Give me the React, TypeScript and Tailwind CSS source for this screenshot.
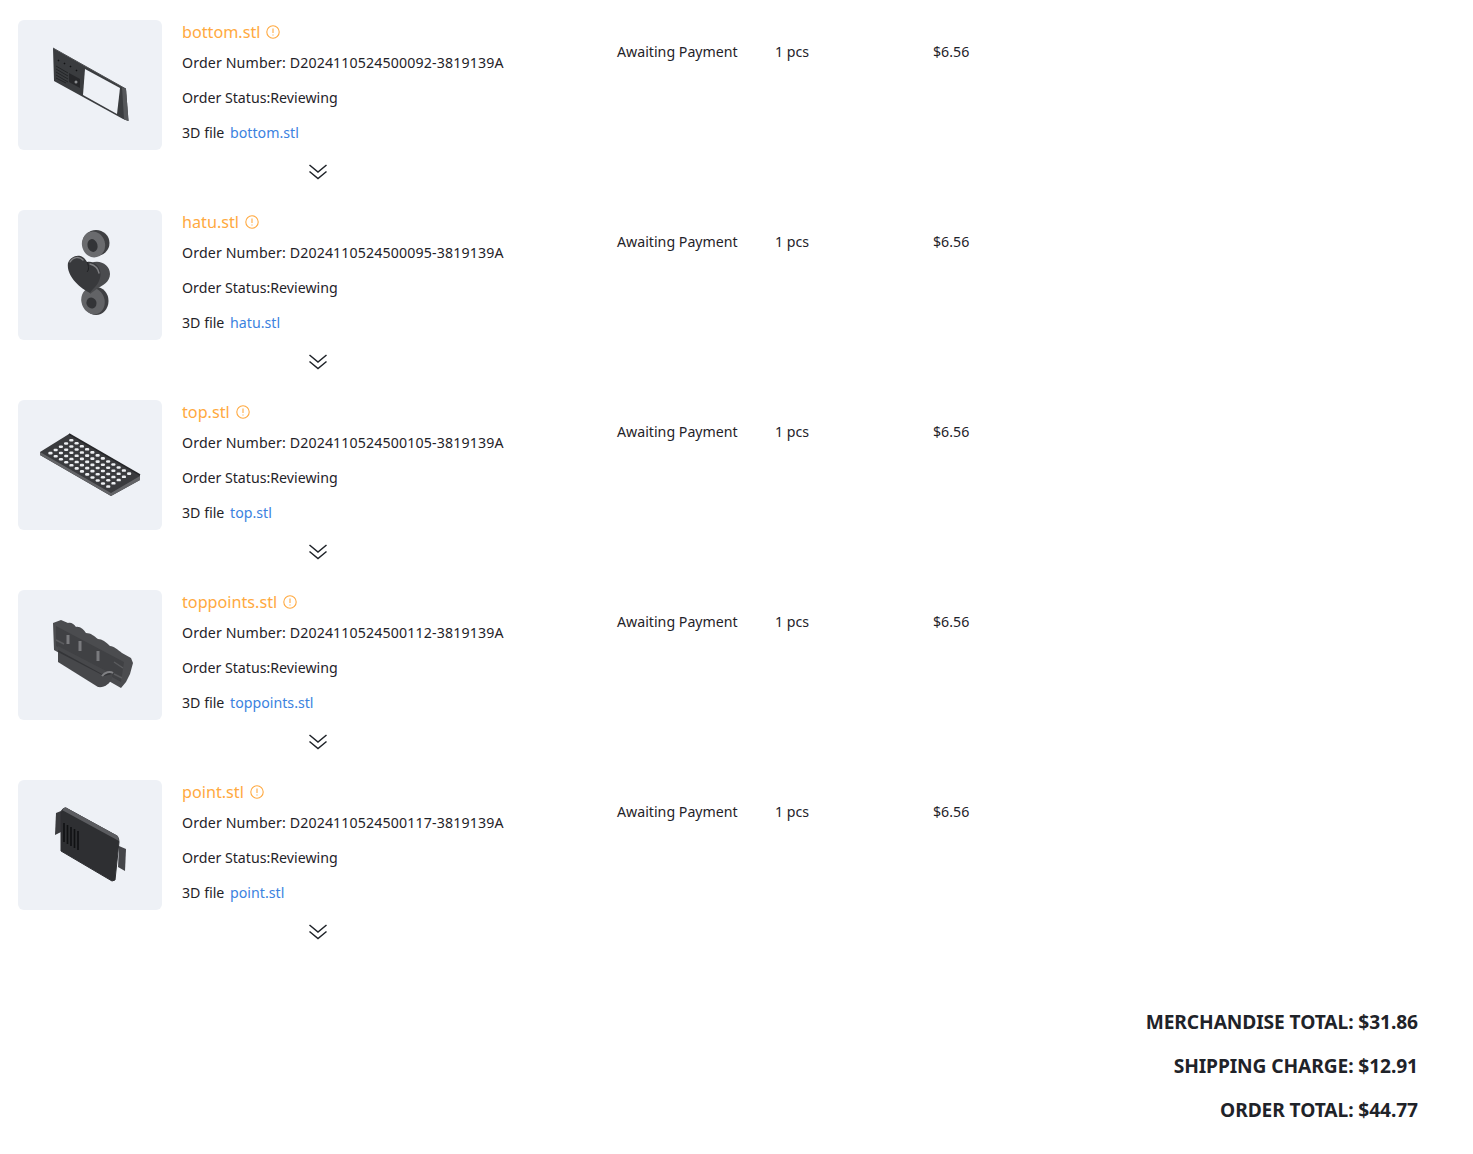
const font = "font-['Noto_Sans','Open_Sans',sans-serif]";

const BottomPart = () => (
  <svg viewBox="0 0 144 130" className="h-full w-full">
    <path d="M35 28 L108 69 L110.5 101 L105 99 L36 61 Z" fill="#3a3c3f" />
    <path d="M67 49 L102 68 L99 94 L65 75 Z" fill="#eef1f6" />
    <path d="M104 67.5 L108 69 L110.5 101 L106 99.5 Z" fill="#55575a" />
    <path d="M35 28 L108 69" stroke="#4d4f52" strokeWidth="1" />
    <path d="M40 40 L41 41 M46 43 L47 44 M52 46 L53 47 M58 50 L59 51" stroke="#111214" strokeWidth="1.5" />
    <path d="M38 46 L50 53 M38 49 L50 56 M38 52 L50 59 M38 55 L50 62 M38 58 L48 63" stroke="#1d1e21" strokeWidth="0.8" />
    <path d="M51 53 L62 59 L62 68 L51 62 Z" fill="#26272a" />
    <circle cx="58" cy="62" r="1.5" fill="#8b8d90" />
  </svg>
);

const HatuPart = () => (
  <svg viewBox="0 0 144 130" className="h-full w-full">
    <ellipse cx="78" cy="33" rx="13.5" ry="13" fill="#3f4043" />
    <ellipse cx="75.5" cy="34.5" rx="11.5" ry="13" fill="#6a6b6e" transform="rotate(-15 75.5 34.5)" />
    <ellipse cx="74.5" cy="35.5" rx="5" ry="6.5" fill="#333437" transform="rotate(-15 74.5 35.5)" />
    <ellipse cx="78" cy="91" rx="12.5" ry="14" fill="#3f4043" />
    <ellipse cx="75" cy="91" rx="11.5" ry="13.5" fill="#626366" transform="rotate(-20 75 91)" />
    <ellipse cx="73.5" cy="93" rx="5" ry="5.5" fill="#333437" transform="rotate(-20 73.5 93)" />
    <path d="M73 53 C82 49 92 55 92 64 C92 72 84 76 80 78 L72 84 Z" fill="#4a4b4e" />
    <path d="M50 53 C53 45 64 42 69 52 C76 50 85 58 82 68 C80 76 74 79 72 83 C62 78 48 66 50 53 Z" fill="#38393c" />
    <path d="M52 52 C55 47 61 46 65 50 M72 54 C76 55 80 58 81 63" fill="none" stroke="#808184" strokeWidth="1.4" strokeLinecap="round" />
    <path d="M69 52 C71 56 71 60 69 62" fill="none" stroke="#1f2023" strokeWidth="1" />
  </svg>
);

// holes laid out along the long and short edges of the plate
const holes: { x: number; y: number }[] = [];
for (let r = 0; r < 5; r++) {
  for (let c = 0; c < 12; c++) {
    const s = 0.14 + r * 0.18;
    const l = 0.09 + c * 0.074;
    holes.push({ x: 22 + s * 29 + l * 71, y: 52 - s * 18 + l * 41 });
  }
}

const TopPart = () => (
  <svg viewBox="0 0 144 130" className="h-full w-full">
    <path d="M22 52 L51 34 L122 75 L122 80 L93 96 L22 55 Z" fill="#3a3b3e" />
    <path d="M22 52 L93 93 L122 76 L122 80 L93 96 L22 55 Z" fill="#636467" />
    <path d="M51 34 L122 75" stroke="#26272a" strokeWidth="1.5" />
    {holes.map((h, i) => (
      <rect key={i} x={h.x - 2.1} y={h.y - 1.3} width="4.2" height="2.6" rx="1.2" fill="#eceef1" />
    ))}
  </svg>
);

const ToppointsPart = () => (
  <svg viewBox="0 0 144 130" className="h-full w-full">
    <path d="M35 33 L43 30 L50 33 C53 32 56 34 58 37 C62 36 66 40 68 43 C73 43 76 46 80 49 C84 49 88 52 92 56 C96 56 100 60 104 63 L113 68 L115 73 L112 84 L108 92 L103 98 L96 94 L36 60 Z" fill="#4b4c4f" />
    <path d="M38 36 L106 72 L103 92 L38 56 Z" fill="#404144" />
    <path d="M40 56 L94 84 L94 88 C92 94 86 98 80 97 L40 72 Z" fill="#47484b" />
    <path d="M40 60 L84 84 C88 82 92 81 94 82 L94 84 L86 86 L40 62 Z" fill="#343538" />
    <path d="M84 86 C87 82 92 81 95 83" fill="none" stroke="#808184" strokeWidth="2" />
    <path d="M50 45 L50 54 M62 51 L62 61 M80 61 L80 71" stroke="#7a7b7e" strokeWidth="3" />
    <path d="M38 50 L46 54 M96 72 L105 78 M96 84 L104 88" stroke="#5a5b5e" strokeWidth="1.5" />
  </svg>
);

const PointPart = () => (
  <svg viewBox="0 0 144 130" className="h-full w-full">
    <path d="M38 33 L43 31 L43 52 L37 55 Z" fill="#3a3b3e" />
    <path d="M101 66 L108 69 L107 91 L100 87 Z" fill="#45464a" />
    <path d="M48 28 L99 56 Q101 58 101 62 L97 100 L94 101 L43 71 L43 32 Q44 28 48 28 Z" fill="#2e2f32" stroke="#2e2f32" strokeWidth="1" strokeLinejoin="round" />
    <path d="M47 27 L100 56 L101 61 L44 30 Z" fill="#5b5c60" />
    <path d="M46 43 L46 62 M49.5 45 L49.5 64 M53 47 L53 66 M56.5 49 L56.5 68 M60 51 L60 70" stroke="#101113" strokeWidth="1.6" />
  </svg>
);

const InfoIcon = () => (
  <svg viewBox="0 0 14 14" className="ml-[6px] h-[14px] w-[14px] shrink-0" fill="none" stroke="#ffa940" strokeWidth="1.1">
    <circle cx="7" cy="7" r="6.2" />
    <path d="M7 3.5 V8 M7 9.5 V10.6" />
  </svg>
);

const DoubleChevron = () => (
  <svg viewBox="0 0 20 18" className="h-[18px] w-5" fill="none" stroke="#1f2329" strokeWidth="1.5">
    <path d="M1.5 2 L10 9 L18.5 2" />
    <path d="M1.5 8.5 L10 15.5 L18.5 8.5" />
  </svg>
);

const items = [
  { name: "bottom.stl", no: "D2024110524500092-3819139A", Part: BottomPart },
  { name: "hatu.stl", no: "D2024110524500095-3819139A", Part: HatuPart },
  { name: "top.stl", no: "D2024110524500105-3819139A", Part: TopPart },
  { name: "toppoints.stl", no: "D2024110524500112-3819139A", Part: ToppointsPart },
  { name: "point.stl", no: "D2024110524500117-3819139A", Part: PointPart },
];

const totals = ["MERCHANDISE TOTAL: $31.86", "SHIPPING CHARGE: $12.91", "ORDER TOTAL: $44.77"];

export default function App() {
  return (
    <div className={`${font} min-h-[1154px] bg-white pt-5 text-[14.2px] text-[#1f2329]`}>
      {items.map(({ name, no, Part }) => (
        <div key={name} className="flex h-[190px] pl-[18px]">
          <div className="h-[130px] w-[144px] shrink-0 rounded-md bg-[#eef1f6]">
            <Part />
          </div>
          <div className="ml-5 w-[435px] shrink-0">
            <div className="flex h-6 items-center text-[16.2px] text-[#ffa940]">
              {name}
              <InfoIcon />
            </div>
            <div className="mt-[9px] h-5 tracking-[0.13px] leading-5">Order Number: {no}</div>
            <div className="mt-[15px] h-5 leading-5">Order Status:Reviewing</div>
            <div className="mt-[15px] h-5 leading-5">
              3D file <a className="ml-0.5 text-[14.2px] text-[#3b82e0]">{name}</a>
            </div>
            <div className="mt-5 flex w-[272px] justify-center">
              <DoubleChevron />
            </div>
          </div>
          <div className="w-[158px] shrink-0 pt-[22px] leading-5">Awaiting Payment</div>
          <div className="w-[158px] shrink-0 pt-[22px] leading-5">1 pcs</div>
          <div className="pt-[22px] leading-5">$6.56</div>
        </div>
      ))}
      <div className="mt-[38px] flex flex-col items-end gap-4 pr-[55px]">
        {totals.map((t) => (
          <div key={t} className="h-7 text-[19.2px] leading-7 font-bold tracking-[-0.1px]">
            {t}
          </div>
        ))}
      </div>
    </div>
  );
}
